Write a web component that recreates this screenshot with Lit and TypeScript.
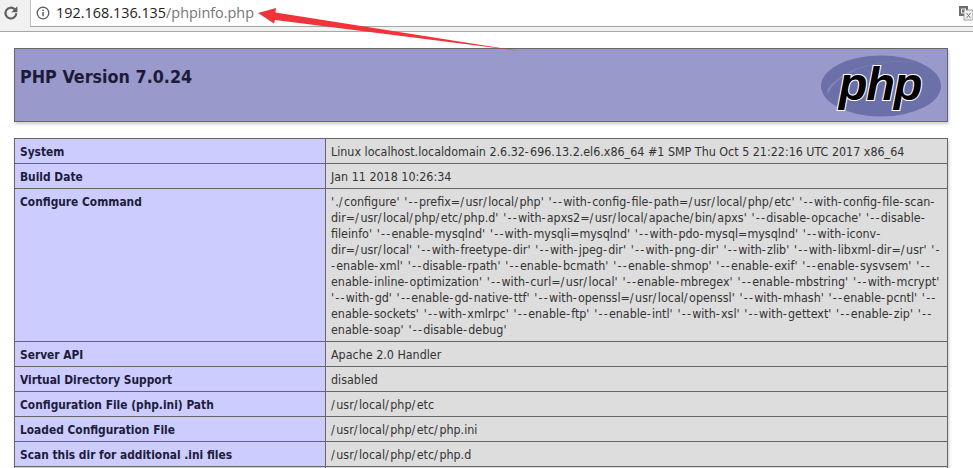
import { LitElement, html, css } from "lit";
import { customElement } from "lit/decorators.js";

const CONFIG = [
  "'./configure' '--prefix=/usr/local/php' '--with-config-file-path=/usr/local/php/etc' '--with-config-file-scan-",
  "dir=/usr/local/php/etc/php.d' '--with-apxs2=/usr/local/apache/bin/apxs' '--disable-opcache' '--disable-",
  "fileinfo' '--enable-mysqlnd' '--with-mysqli=mysqlnd' '--with-pdo-mysql=mysqlnd' '--with-iconv-",
  "dir=/usr/local' '--with-freetype-dir' '--with-jpeg-dir' '--with-png-dir' '--with-zlib' '--with-libxml-dir=/usr' '-",
  "-enable-xml' '--disable-rpath' '--enable-bcmath' '--enable-shmop' '--enable-exif' '--enable-sysvsem' '--",
  "enable-inline-optimization' '--with-curl=/usr/local' '--enable-mbregex' '--enable-mbstring' '--with-mcrypt'",
  "'--with-gd' '--enable-gd-native-ttf' '--with-openssl=/usr/local/openssl' '--with-mhash' '--enable-pcntl' '--",
  "enable-sockets' '--with-xmlrpc' '--enable-ftp' '--enable-intl' '--with-xsl' '--with-gettext' '--enable-zip' '--",
  "enable-soap' '--disable-debug'",
];

const ROWS: [string, string | string[]][] = [
  ["System", "Linux localhost.localdomain 2.6.32-696.13.2.el6.x86_64 #1 SMP Thu Oct 5 21:22:16 UTC 2017 x86_64"],
  ["Build Date", "Jan 11 2018 10:26:34"],
  ["Configure Command", CONFIG],
  ["Server API", "Apache 2.0 Handler"],
  ["Virtual Directory Support", "disabled"],
  ["Configuration File (php.ini) Path", "/usr/local/php/etc"],
  ["Loaded Configuration File", "/usr/local/php/etc/php.ini"],
  ["Scan this dir for additional .ini files", "/usr/local/php/etc/php.d"],
  ["", ""],
];

// The reference font has wider slashes, hyphens and quotes than DejaVu Sans Condensed.
function spaced(line: string) {
  return line.split(/([\/'\-])/).map((part) => {
    if (part === "/") return html`<span class="slash">/</span>`;
    if (part === "-" || part === "'") return html`<span class="mark">${part}</span>`;
    return part;
  });
}

@customElement("app-root")
export class AppRoot extends LitElement {
  static styles = css`
    :host {
      display: block;
      position: relative;
      height: 468px;
      overflow: hidden;
      background: #fff;
      font-family: "DejaVu Sans", sans-serif;
      font-stretch: condensed;
      font-size: 12.4px;
      line-height: 16px;
      color: #222;
    }
    .toolbar {
      display: flex;
      height: 32px;
      box-sizing: border-box;
      background: #f1f1f1;
      border-bottom: 1px solid #a8a8a8;
    }
    .reload {
      width: 30px;
      flex: none;
      display: flex;
      align-items: flex-start;
      padding: 5px 0 0 3px;
      box-sizing: border-box;
    }
    .address {
      flex: 1;
      height: 27px;
      box-sizing: border-box;
      background: #fff;
      border-left: 1px solid #c4c4c4;
      border-bottom: 1px solid #a4a4a4;
      display: flex;
      align-items: center;
      padding: 0 5px 1px 5px;
      font-family: "Open Sans", sans-serif;
      font-stretch: normal;
      font-size: 14.4px;
    }
    .address svg { flex: none; }
    .host { color: #222; margin-left: 6px; }
    .path { color: #757575; }
    .page {
      padding: 16px 25px 0 14px;
      display: flex;
      flex-direction: column;
      gap: 16px;
    }
    .head {
      height: 74px;
      box-sizing: border-box;
      background: #9999cc;
      border: 1px solid #666;
      box-shadow: 1px 2px 3px #ccc;
      display: flex;
      justify-content: space-between;
      padding: 0 5px;
    }
    h1 {
      margin: 17px 0 0;
      font-size: 17.8px;
      line-height: 21px;
      font-weight: bold;
      color: #1c1c3a;
    }
    .logo { margin-top: 5px; }
    table {
      width: 934px;
      table-layout: fixed;
      border-collapse: collapse;
      box-shadow: 1px 2px 3px #ccc;
    }
    td {
      border: 1px solid #666;
      padding: 5px 5px 3px;
      vertical-align: top;
      white-space: nowrap;
    }
    td.e {
      width: 300px;
      background: #ccccff;
      font-weight: bold;
      font-size: 11.85px;
      color: #1c1c3a;
    }
    td.v {
      background: #dddddd;
      color: #333;
    }
    .slash { letter-spacing: 1.5px; }
    .mark { letter-spacing: 1.2px; }
    .arrow {
      position: absolute;
      left: 0;
      top: 0;
      pointer-events: none;
    }
    .translate {
      position: absolute;
      left: 959px;
      top: 6px;
    }
  `;

  private renderValue(v: string | string[]) {
    return Array.isArray(v) ? v.map((l) => html`<div>${spaced(l)}</div>`) : spaced(v);
  }

  render() {
    return html`
      <div class="toolbar">
        <div class="reload">
          <svg width="16" height="16" viewBox="0 0 16 16" fill="none">
            <path d="M13.3 8.2a5.4 5.4 0 1 1-1.6-4" stroke="#5c5c5c" stroke-width="2.1"/>
            <path d="M14.4 1.2v6H8.4z" fill="#5c5c5c"/>
          </svg>
        </div>
        <div class="address">
          <svg width="14" height="14" viewBox="0 0 14 14" fill="none">
            <circle cx="7" cy="7" r="5.8" stroke="#5a5a5a" stroke-width="1.3"/>
            <rect x="6.3" y="6" width="1.5" height="4.2" fill="#5a5a5a"/>
            <rect x="6.3" y="3.6" width="1.5" height="1.5" fill="#5a5a5a"/>
          </svg>
          <span class="host">192.168.136.135</span><span class="path">/phpinfo.php</span>
        </div>
      </div>
      <div class="page">
        <div class="head">
          <h1>PHP Version 7.0.24</h1>
          <svg class="logo" width="122" height="64" viewBox="0 0 122 64">
            <ellipse cx="61" cy="32" rx="60" ry="30.5" fill="#6c70a8"/>
            <path d="M8 40C18 16 60 4 96 8 78 5 36 8 14 28 8 33 6 37 8 40z" fill="#8a8ec0" opacity=".7"/>
            <text x="60" y="46" text-anchor="middle" font-family="Liberation Sans" font-weight="bold" font-style="italic" font-size="47" letter-spacing="-1.2" fill="#000" stroke="#fff" stroke-width="2.2" paint-order="stroke">php</text>
          </svg>
        </div>
        <table>
          ${ROWS.map(([k, v]) => html`<tr><td class="e">${k}</td><td class="v">${this.renderValue(v)}</td></tr>`)}
        </table>
      </div>
      <svg class="arrow" width="973" height="60" viewBox="0 0 973 60">
        <polygon points="258,13 276,8 275.5,12.5 520,51 275,20 274,23.5" fill="#f0343c"/>
      </svg>
      <svg class="translate" width="14" height="15" viewBox="0 0 14 15">
        <rect x="0" y="0" width="9" height="10" fill="#6e6e6e"/>
        <rect x="5" y="4" width="9" height="10" fill="#f2f2f2" stroke="#8a8a8a" stroke-width=".8"/>
        <rect x="2.5" y="3" width="4" height="4" fill="none" stroke="#eee" stroke-width="1"/>
        <path d="M7.5 7l4 5M11.5 7l-4 5" stroke="#777" stroke-width="1"/>
      </svg>
    `;
  }
}
